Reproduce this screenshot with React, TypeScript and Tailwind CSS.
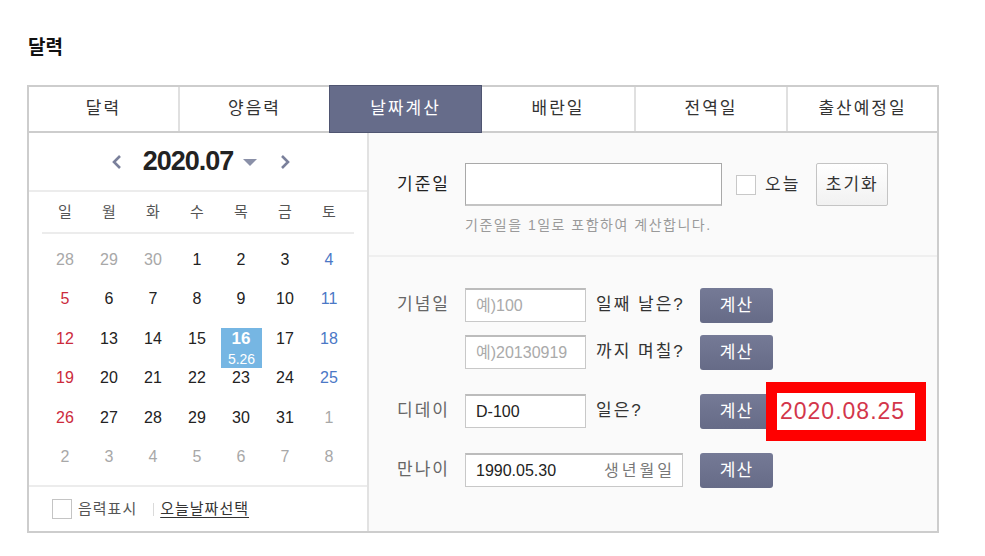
const tabs = ['달력', '양음력', '날짜계산', '배란일', '전역일', '출산예정일']
const weekdays = ['일', '월', '화', '수', '목', '금', '토']

type Day = { n: number; kind: 'off' | 'sun' | 'sat' | 'day' }

const weeks: Day[][] = [
  [28, 29, 30, 1, 2, 3, 4],
  [5, 6, 7, 8, 9, 10, 11],
  [12, 13, 14, 15, 16, 17, 18],
  [19, 20, 21, 22, 23, 24, 25],
  [26, 27, 28, 29, 30, 31, 1],
  [2, 3, 4, 5, 6, 7, 8],
].map((row, r) =>
  row.map((n, c) => {
    const off = (r === 0 && n > 7) || (r >= 4 && n < 20)
    if (off) return { n, kind: 'off' as const }
    if (c === 0) return { n, kind: 'sun' as const }
    if (c === 6) return { n, kind: 'sat' as const }
    return { n, kind: 'day' as const }
  })
)

const dayColor = {
  off: 'text-[#a8a8a8]',
  sun: 'text-[#cc2b3c]',
  sat: 'text-[#4b78c6]',
  day: 'text-[#222]',
}

function CalcButton() {
  return (
    <button className="w-[73px] h-[35px] rounded-[3px] bg-gradient-to-b from-[#757a96] to-[#666b87] text-white text-[17px] tracking-[1px] leading-none shrink-0">
      계산
    </button>
  )
}

function Chevron({ dir }: { dir: 'l' | 'r' }) {
  return (
    <svg width="10" height="16" viewBox="0 0 10 16" className="shrink-0">
      <polyline
        points={dir === 'l' ? '8,2 2,8 8,14' : '2,2 8,8 2,14'}
        fill="none"
        stroke="#7a809b"
        strokeWidth="2.6"
      />
    </svg>
  )
}

function SmallInput({ value, placeholder }: { value?: string; placeholder?: string }) {
  return (
    <div className="w-[121px] h-[34px] border border-[#c8c8c8] border-t-2 border-t-[#bcbcbc] bg-white flex items-center pl-[10px] text-[16px] shrink-0">
      {value ? <span className="text-[#222]">{value}</span> : <span className="text-[#aaa]">{placeholder}</span>}
    </div>
  )
}

export default function App() {
  return (
    <div className="w-[985px] h-[556px] bg-white font-['Liberation_Sans','Noto_Sans_CJK_KR',sans-serif] text-[#333]">
      <div className="pl-[28px] pt-[36px] h-[85px]">
        <h2 className="text-[19px] font-bold text-[#111] leading-[24px]">달력</h2>
      </div>

      <div className="ml-[27px] w-[912px] h-[448px] border-2 border-[#cdcdcd] flex flex-col">
        {/* tabs */}
        <div className="grid grid-cols-[149px_151px_153px_152px_152px_151px] h-[46px] border-b-2 border-[#cdcdcd]">
          {tabs.map((t, i) =>
            i === 2 ? (
              <div
                key={t}
                className="-mt-[2px] -mb-[2px] h-[48px] bg-[#666c8a] border border-[#4f5571] flex items-center justify-center text-white text-[17px] tracking-[2px]"
              >
                {t}
              </div>
            ) : (
              <div
                key={t}
                className={`flex items-center justify-center text-[17px] tracking-[2px] text-[#333] ${i === 1 || i >= 4 ? 'border-l-2 border-[#e0e0e0]' : ''}`}
              >
                {t}
              </div>
            )
          )}
        </div>

        <div className="flex flex-1">
          {/* calendar */}
          <div className="w-[338px] flex flex-col bg-white">
            <div className="h-[59px] border-b-2 border-[#ececec] flex items-center justify-center pl-[6px]">
              <Chevron dir="l" />
              <span className="ml-[21px] text-[27px] font-bold tracking-[-1px] text-[#222] leading-none">2020.07</span>
              <svg width="14" height="8" viewBox="0 0 14 8" className="ml-[10px] mt-[3px]">
                <polygon points="0,0 14,0 7,7" fill="#8a90a8" />
              </svg>
              <span className="ml-[23px]">
                <Chevron dir="r" />
              </span>
            </div>

            <div className="mx-[13px] h-[42px] border-b-2 border-[#ececec]">
              <div className="ml-[1px] grid grid-cols-[repeat(7,44px)] h-full items-center">
                {weekdays.map((w) => (
                  <span key={w} className="text-center text-[15px] text-[#555]">
                    {w}
                  </span>
                ))}
              </div>
            </div>

            <div className="pl-[14px] pt-[6px] pb-[8px]">
              {weeks.map((row, r) => (
                <div key={r} className="grid grid-cols-[repeat(7,44px)] h-[39.5px] items-center">
                  {row.map((d, c) =>
                    r === 2 && c === 4 ? (
                      <div key={c} className="relative h-full flex items-center justify-center">
                        <div className="absolute left-[2px] top-[9px] w-[41px] h-[40px] bg-[#76b6e3] flex items-end justify-center pb-[2px]">
                          <span className="text-white text-[14px] leading-none">5.26</span>
                        </div>
                        <span className="relative text-white font-bold text-[17px]">16</span>
                      </div>
                    ) : (
                      <span key={c} className={`text-center text-[16px] ${dayColor[d.kind]}`}>
                        {d.n}
                      </span>
                    )
                  )}
                </div>
              ))}
            </div>

            <div className="flex-1 border-t-2 border-[#ececec] flex items-center pl-[23px]">
              <span className="w-[20px] h-[20px] border border-[#c4c4c4] bg-white" />
              <span className="ml-[6px] text-[15px] tracking-[1px] text-[#555]">음력표시</span>
              <span className="ml-[16px] w-px h-[13px] bg-[#dadada]" />
              <span className="ml-[6px] text-[15px] tracking-[1px] text-[#333] underline underline-offset-[3px]">오늘날짜선택</span>
            </div>
          </div>

          {/* calculator */}
          <div className="flex-1 border-l-2 border-[#e2e2e2] bg-[#fafafa] flex flex-col">
            <div className="h-[124px] border-b-2 border-[#efefef] pl-[28px] pt-[30px]">
              <div className="flex items-center h-[43px]">
                <span className="w-[68px] text-[17px] tracking-[2px] text-[#222]">기준일</span>
                <div className="w-[257px] h-[43px] border border-[#a9a9a9] border-b-2 border-b-[#c4c4c4] bg-white" />
                <span className="ml-[14px] w-[20px] h-[20px] border border-[#c8c8c8] bg-white" />
                <span className="ml-[9px] text-[17px] tracking-[2px] text-[#333]">오늘</span>
                <button className="ml-[16px] w-[72px] h-[43px] border border-[#c4c4c4] rounded-[2px] bg-gradient-to-b from-white to-[#f1f1f1] text-[17px] tracking-[2px] text-[#333]">
                  초기화
                </button>
              </div>
              <p className="ml-[68px] mt-[10px] text-[14px] tracking-[1.5px] leading-[18px] text-[#9a9a9a]">
                기준일을 1일로 포함하여 계산합니다.
              </p>
            </div>

            <div className="pl-[28px] pt-[31px] flex flex-col">
              <div className="flex items-center h-[34px]">
                <span className="w-[68px] text-[17px] tracking-[2px] text-[#666]">기념일</span>
                <SmallInput placeholder="예)100" />
                <span className="ml-[10px] w-[104px] text-[17px] tracking-[2px] text-[#333]">일째 날은?</span>
                <CalcButton />
              </div>
              <div className="flex items-center h-[34px] mt-[13px]">
                <span className="w-[68px]" />
                <SmallInput placeholder="예)20130919" />
                <span className="ml-[10px] w-[104px] text-[17px] tracking-[2px] text-[#333]">까지 며칠?</span>
                <CalcButton />
              </div>
              <div className="flex items-center h-[34px] mt-[25px]">
                <span className="w-[68px] text-[17px] tracking-[2px] text-[#666]">디데이</span>
                <SmallInput value="D-100" />
                <span className="ml-[10px] w-[104px] text-[17px] tracking-[2px] text-[#333]">일은?</span>
                <CalcButton />
                <div className="relative z-10 -ml-[7px] w-[160px] h-[59px] border-[11px] border-[#ff0000] bg-white flex items-center pl-[3px]">
                  <span className="text-[23px] tracking-[1px] text-[#d3364b] leading-none">2020.08.25</span>
                </div>
              </div>
              <div className="flex items-center h-[34px] mt-[25px]">
                <span className="w-[68px] text-[17px] tracking-[2px] text-[#666]">만나이</span>
                <div className="w-[218px] h-[34px] border border-[#c8c8c8] border-t-2 border-t-[#bcbcbc] bg-white flex items-center justify-between pl-[10px] pr-[7px] text-[16px]">
                  <span className="text-[#222]">1990.05.30</span>
                  <span className="text-[#777] tracking-[3px]">생년월일</span>
                </div>
                <span className="ml-[17px]">
                  <CalcButton />
                </span>
              </div>
            </div>
          </div>
        </div>
      </div>
    </div>
  )
}
